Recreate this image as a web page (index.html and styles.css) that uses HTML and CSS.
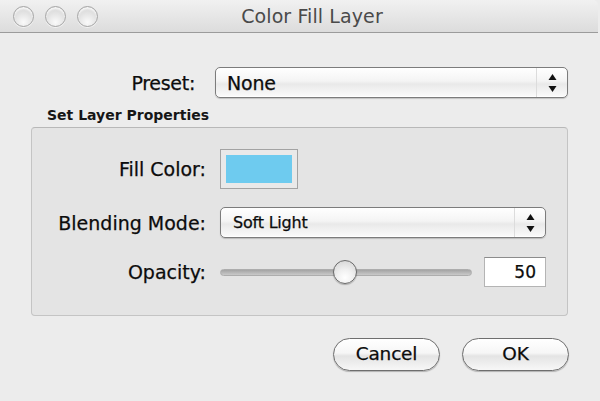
FILE: index.html
```html
<!DOCTYPE html>
<html>
<head>
<meta charset="utf-8">
<link rel="stylesheet" href="styles.css">
</head>
<body>
<div class="window">
  <div class="titlebar">
    <div class="lights">
      <span class="light"></span>
      <span class="light"></span>
      <span class="light"></span>
    </div>
    <div class="title">Color Fill Layer</div>
  </div>
  <div class="content">
    <div class="preset-row">
      <label class="label preset-label">Preset:</label>
      <div class="select select-big">
        <span class="select-text">None</span>
        <span class="select-arrows">
          <svg width="9" height="20" viewBox="0 0 9 20"><polygon points="4.5,1 8.5,7 0.5,7" fill="#111"/><polygon points="0.5,13 8.5,13 4.5,19" fill="#111"/></svg>
        </span>
      </div>
    </div>
    <div class="group-title">Set Layer Properties</div>
    <div class="group">
      <div class="grow row-fill">
        <label class="label">Fill Color:</label>
        <div class="swatch"><div class="swatch-color"></div></div>
      </div>
      <div class="grow row-blend">
        <label class="label">Blending Mode:</label>
        <div class="select select-small">
          <span class="select-text small-text">Soft Light</span>
          <span class="select-arrows">
            <svg width="9" height="20" viewBox="0 0 9 20"><polygon points="4.5,1 8.5,7 0.5,7" fill="#111"/><polygon points="0.5,13 8.5,13 4.5,19" fill="#111"/></svg>
          </span>
        </div>
      </div>
      <div class="grow row-opacity">
        <label class="label">Opacity:</label>
        <div class="opacity-controls">
          <div class="slider">
            <div class="track"></div>
            <div class="thumb"></div>
          </div>
          <div class="numfield">50</div>
        </div>
      </div>
    </div>
    <div class="buttons">
      <div class="btn">Cancel</div>
      <div class="btn">OK</div>
    </div>
  </div>
</div>
</body>
</html>
```
FILE: styles.css
```css
html, body {
  margin: 0;
  padding: 0;
}
body {
  width: 600px;
  height: 401px;
  overflow: hidden;
  background: #ececec;
  font-family: "DejaVu Sans", "Liberation Sans", sans-serif;
  color: #111;
}
.window {
  width: 598px;
  height: 401px;
  background: #ececec;
  border-top-right-radius: 5px;
}
.titlebar {
  height: 32px;
  border-bottom: 1px solid #9b9b9b;
  background: linear-gradient(#f1f1f1, #dcdcdc);
  display: flex;
  align-items: center;
  position: relative;
  border-top-right-radius: 5px;
}
.lights {
  display: flex;
  gap: 11px;
  padding-left: 13px;
  padding-top: 1px;
}
.light {
  width: 19px;
  height: 19px;
  border-radius: 50%;
  border: 1px solid #a6a6a6;
  background: radial-gradient(circle at 50% 80%, #fafafa 0%, #e6e6e6 45%, #cfcfcf 100%);
  box-shadow: inset 0 2px 2px rgba(255,255,255,0.8), 0 1px 0 rgba(255,255,255,0.6);
}
.title {
  position: absolute;
  left: 0;
  right: 0;
  top: 0;
  height: 32px;
  line-height: 33px;
  text-align: center;
  padding-left: 26px;
  font-size: 19px;
  color: #4a4a4a;
  letter-spacing: 0.1px;
}
.content {
  padding: 34px 0 0 0;
}
.label {
  font-size: 19px;
  color: #0c0c0c;
  text-align: right;
  white-space: nowrap;
  letter-spacing: 0;
  -webkit-text-stroke: 0.25px #0c0c0c;
}
.preset-label {
  letter-spacing: -0.3px;
}
.preset-row {
  display: flex;
  align-items: center;
  height: 31px;
}
.preset-label {
  width: 195px;
  margin-right: 20px;
}
.select {
  box-sizing: border-box;
  height: 31px;
  border: 1px solid #7c7c7c;
  border-radius: 5px;
  background: linear-gradient(#ffffff 0%, #f4f4f4 45%, #e9e9e9 55%, #fbfbfb 100%);
  box-shadow: 0 1px 1px rgba(0,0,0,0.18), inset 0 -1px 0 rgba(255,255,255,0.9);
  display: flex;
  align-items: center;
}
.select-big {
  width: 353px;
}
.select-small {
  width: 326px;
}
.select-text {
  flex: 1;
  padding-left: 11px;
  font-size: 19px;
  color: #0c0c0c;
  letter-spacing: -0.2px;
  -webkit-text-stroke: 0.25px #0c0c0c;
}
.small-text {
  font-size: 16px;
  padding-left: 12px;
}
.select-arrows {
  width: 30px;
  height: 100%;
  border-left: 1px solid #dcdcdc;
  display: flex;
  align-items: center;
  justify-content: center;
}
.group-title {
  margin: 8px 0 0 47px;
  height: 21px;
  line-height: 18px;
  font-size: 14px;
  font-weight: bold;
  color: #161616;
  letter-spacing: 0;
}
.group {
  box-sizing: border-box;
  margin-left: 31px;
  width: 537px;
  height: 189px;
  border: 1px solid #c4c4c4;
  border-top-color: #b8b8b8;
  border-radius: 4px;
  background: #e4e4e4;
  padding: 21px 0 0 0;
  display: flex;
  flex-direction: column;
}
.grow {
  display: flex;
  align-items: center;
}
.grow .label {
  width: 174px;
  margin-right: 14px;
}
.row-fill {
  height: 40px;
}
.row-blend {
  height: 31px;
  margin-top: 18px;
}
.row-opacity {
  height: 30px;
  margin-top: 19px;
}
.swatch {
  box-sizing: border-box;
  width: 78px;
  height: 40px;
  border: 1px solid #a3a3a3;
  background: #e9e9e9;
  padding: 5px;
}
.swatch-color {
  width: 100%;
  height: 100%;
  background: #6ecbef;
}
.opacity-controls {
  display: flex;
  align-items: center;
  gap: 12px;
}
.slider {
  position: relative;
  width: 252px;
  height: 30px;
  display: flex;
  align-items: center;
}
.track {
  width: 100%;
  height: 7px;
  border-radius: 4px;
  background: linear-gradient(#a4a4a4, #c9c9c9);
  border: 1px solid #adadad;
  box-sizing: border-box;
}
.thumb {
  position: absolute;
  left: 113px;
  top: 3px;
  width: 24px;
  height: 24px;
  box-sizing: border-box;
  border-radius: 50%;
  border: 1.5px solid #6a6a6a;
  background: radial-gradient(circle at 50% 75%, #ffffff 0%, #f0f0f0 40%, #d0d0d0 100%);
  box-shadow: 0 1px 1px rgba(0,0,0,0.25);
}
.numfield {
  box-sizing: border-box;
  width: 62px;
  height: 30px;
  background: #fff;
  border: 1px solid #b4b4b4;
  border-top-color: #8c8c8c;
  text-align: right;
  padding-right: 9px;
  font-size: 17px;
  line-height: 29px;
  color: #0c0c0c;
  -webkit-text-stroke: 0.25px #0c0c0c;
}
.buttons {
  display: flex;
  gap: 22px;
  margin: 22px 0 0 333px;
}
.btn {
  box-sizing: border-box;
  width: 107px;
  height: 33px;
  border-radius: 17px;
  border: 1.5px solid #6e6e6e;
  background: linear-gradient(#ffffff 0%, #f6f6f6 45%, #e4e4e4 55%, #f7f7f7 100%);
  box-shadow: 0 1px 1px rgba(0,0,0,0.25);
  text-align: center;
  font-size: 18.5px;
  line-height: 30px;
  color: #0c0c0c;
  letter-spacing: -0.2px;
  -webkit-text-stroke: 0.25px #0c0c0c;
}
```
